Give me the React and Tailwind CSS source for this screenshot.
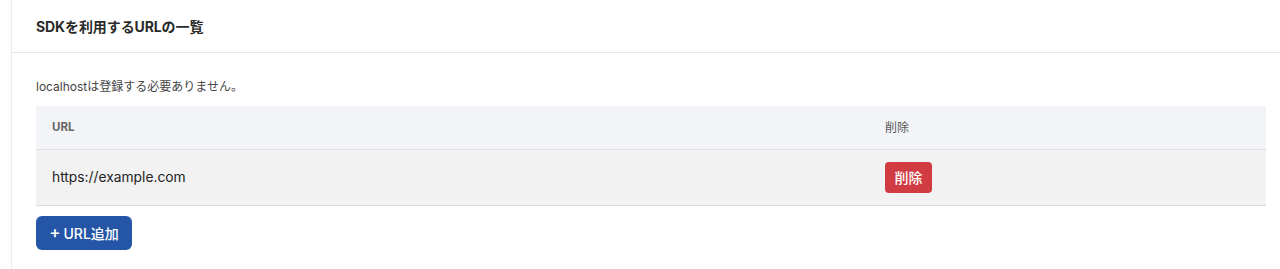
export default function App() {
  const font = { fontFamily: 'Inter, "Noto Sans CJK JP", sans-serif' };
  return (
    <div className="w-[1280px] h-[269px] overflow-hidden bg-white" style={font}>
      <div className="ml-[11px] w-[1280px] h-[290px] -mt-[1px] border border-[#ececec] bg-white">
        <div className="h-[53px] flex items-center pl-[24px] border-b border-[#e8e8e8]">
          <h2 className="text-[14px] font-bold text-[#2a2a2a] tracking-[-0.1px]">SDKを利用するURLの一覧</h2>
        </div>
        <div className="pl-[24px] pr-[13px] pt-[26px]">
          <p className="text-[12px] text-[#444] leading-[16px]">localhostは登録する必要ありません。</p>
          <div className="mt-[11px] w-[1230px] border-b border-[#dcdcdc]">
            <div className="flex h-[44px] items-center bg-[#f3f4f7] border-b border-[#dedede]">
              <div className="w-[849px] pl-[16px] text-[11.5px] font-bold text-[#666]">URL</div>
              <div className="text-[12px] text-[#555]">削除</div>
            </div>
            <div className="flex h-[55px] items-center bg-[#f2f2f2]">
              <div className="w-[849px] pl-[16px] text-[13.8px] text-[#222]">https://example.com</div>
              <button className="h-[31px] w-[47px] rounded-[4px] bg-[#d13b42] text-white text-[14px] font-medium">削除</button>
            </div>
          </div>
          <button className="mt-[10px] h-[34px] w-[96px] rounded-[6px] bg-[#2455a6] text-white text-[14px] font-medium flex items-center justify-center gap-[3px]">
            <span className="text-[17px] leading-none -mt-[2px]">+</span>
            <span>URL追加</span>
          </button>
        </div>
      </div>
    </div>
  );
}
